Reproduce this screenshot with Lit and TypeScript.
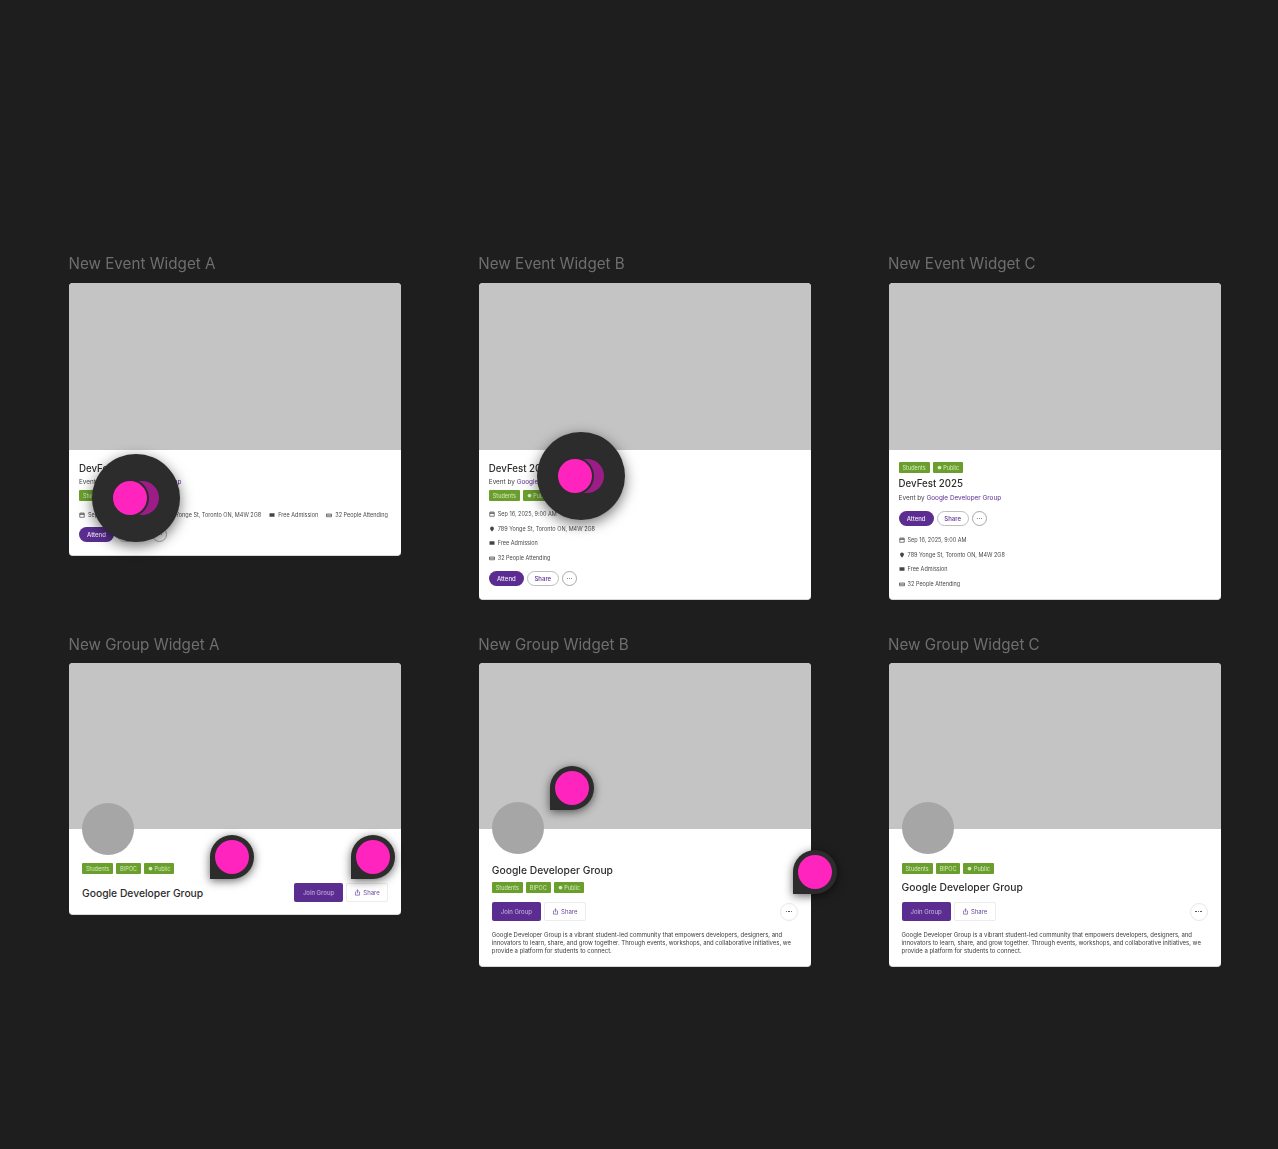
import { LitElement, html, css, svg } from "lit";
import { customElement } from "lit/decorators.js";

const icons: Record<string, unknown> = {
  cal: svg`<path d="M1.5 2.5h9v8h-9zM1.5 5h9M4 1v2.5M8 1v2.5" fill="none" stroke="currentColor" stroke-width="1.4"/>`,
  pin: svg`<path d="M6 11S2.2 7.4 2.2 4.8a3.8 3.8 0 0 1 7.6 0C9.800 7.400 6 11 6 11z" fill="currentColor"/>`,
  ticket: svg`<path d="M1 2.500h4.500L6 3.200l.5-.7H11v7H6.500L6 8.800l-.5.700H1z" fill="currentColor"/>`,
  people: svg`<path d="M1 9.500V4h10v5.500zM1 6.500h10" fill="none" stroke="currentColor" stroke-width="1.400"/>`,
  share: svg`<path d="M4 5H2.500v5.500h7V5H8M6 7.500V1.500M4.200 3.200 6 1.500l1.800 1.700" fill="none" stroke="currentColor" stroke-width="1"/>`,
  globe: svg`<circle cx="6" cy="6" r="4.500" fill="currentColor"/>`,
};

const icon = (name: string, cls = "ic") =>
  html`<svg class=${cls} viewBox="0 0 12 12" aria-hidden="true">${icons[name]}</svg>`;

const meta: [string, string][] = [
  ["cal", "Sep 16, 2025, 9:00 AM"],
  ["pin", "789 Yonge St, Toronto ON, M4W 2G8"],
  ["ticket", "Free Admission"],
  ["people", "32 People Attending"],
];

const dots = html`<span class="dots"><i></i><i></i><i></i></span>`;

@customElement("app-root")
export class AppRoot extends LitElement {
  static styles = css`
    :host {
      display: block;
      width: 1278px;
      height: 1149px;
      overflow: hidden;
      background: #1e1e1e;
      font-family: Inter, "Liberation Sans", sans-serif;
      color: #2a2a2a;
    }
    .board {
      display: grid;
      grid-template-columns: repeat(3, 332px);
      grid-template-rows: 381px auto;
      column-gap: 77.800px;
      padding: 255px 0 0 69px;
    }
    .cell { display: flex; flex-direction: column; gap: 10px; align-items: stretch; min-width: 0; }
    .cell.lower { gap: 9px; }
    .label {
      font-size: 15.200px;
      line-height: 18px;
      margin-left: -0.500px;
      color: #6e6e6e;
      white-space: nowrap;
      filter: blur(0.300px);
    }
    .card {
      position: relative;
      background: #fff;
      border-radius: 4px;
      border-bottom: 1px solid #d8d8d8;
      box-sizing: border-box;
      filter: blur(0.500px);
    }
    .cover { background: #c4c4c4; border-radius: 4px 4px 0 0; }
    .cover.event { height: 167px; }
    .cover.group { height: 166px; }
    .body { display: flex; flex-direction: column; }
    .event-body { padding: 0 10px; }
    .group-body { padding: 0 13px; }

    h3 { margin: 0; font-weight: 500; white-space: nowrap; color: #2c2c2c; }
    .ev-title { font-size: 9.700px; line-height: 13px; }
    .gr-title { font-size: 10.300px; line-height: 14px; }
    .by { font-size: 6.400px; line-height: 9px; white-space: nowrap; color: #444; }
    .by b { font-weight: 400; color: #5b2d91; }

    .tags { display: flex; gap: 3px; }
    .tag {
      display: flex;
      align-items: center;
      gap: 1.500px;
      height: 11px;
      padding: 0 4px;
      background: #6a9f2e;
      color: #d6e8bf;
      font-size: 5.500px;
      border-radius: 1px;
      white-space: nowrap;
    }
    .tag svg { width: 5px; height: 5px; color: inherit; }

    .meta { display: flex; flex-direction: column; gap: 6.500px; }
    .meta.row { flex-direction: row; gap: 8px; }
    .mi {
      display: flex;
      align-items: center;
      gap: 3px;
      font-size: 5.500px;
      line-height: 8px;
      color: #4a4a4a;
      white-space: nowrap;
    }
    .ic { width: 6px; height: 6px; color: #444; flex: none; }

    .actions { display: flex; align-items: center; gap: 3px; }
    .pill {
      display: flex;
      align-items: center;
      justify-content: center;
      height: 15px;
      border-radius: 8px;
      font-size: 6px;
      font-weight: 500;
      box-sizing: border-box;
    }
    .pill.attend { width: 35px; background: #5b2d91; color: #f2eaf8; }
    .pill.share { width: 32px; background: #fff; border: 1px solid #bdbdbd; color: #5b2d91; }
    .pill.more { width: 15px; background: #fff; border: 1px solid #a8a8a8; color: #666; }

    .dots { display: flex; gap: 1px; }
    .dots i { width: 1px; height: 1px; border-radius: 50%; background: currentColor; display: block; }

    .avatar {
      width: 52px;
      height: 52px;
      border-radius: 50%;
      background: #a6a6a6;
      margin-top: -27px;
      flex: none;
    }
    .avatar.low { margin-top: -26px; }
    .btns { display: flex; align-items: center; gap: 3px; }
    .btn {
      display: flex;
      align-items: center;
      justify-content: center;
      gap: 2px;
      height: 19px;
      border-radius: 2px;
      font-size: 6px;
      box-sizing: border-box;
      white-space: nowrap;
    }
    .btn.join { width: 49px; background: #5b2d91; color: #cdb8e4; }
    .btn.sh { width: 42px; background: #fff; border: 1px solid #ececec; color: #6a4a9a; }
    .btn.sh svg { width: 7px; height: 7px; color: #5b2d91; }
    .spread { display: flex; align-items: center; justify-content: space-between; }
    .circle {
      width: 18px;
      height: 18px;
      border-radius: 50%;
      border: 1px solid #e8e8e8;
      box-sizing: border-box;
      display: flex;
      align-items: center;
      justify-content: center;
      color: #444;
    }
    .circle .dots i { width: 1.500px; height: 1.500px; }
    .desc {
      margin: 0;
      font-size: 5.960px;
      line-height: 8px;
      color: #3a3a3a;
    }

    /* overlays */
    .cursor {
      position: absolute;
      width: 88px;
      height: 88px;
      border-radius: 50%;
      background: #2c2c2c;
      box-shadow: 0 4px 14px rgba(0, 0, 0, 0.55);
    }
    .cursor .back, .cursor .front {
      position: absolute;
      top: 27px;
      width: 34px;
      height: 34px;
      border-radius: 50%;
    }
    .cursor .back {
      left: 33px;
      background: radial-gradient(circle, #d41fb4 0.6px, #9c1c88 0.7px) 0 0 / 2px 2px;
    }
    .cursor .front {
      left: 21px;
      background: #ff24bd;
      box-shadow: 0 0 0 2px #2c2c2c;
    }
    .pinm {
      position: absolute;
      width: 44px;
      height: 44px;
      box-sizing: border-box;
      padding: 5px;
      background: #2c2c2c;
      border-radius: 50% 50% 50% 0;
      box-shadow: 0 2px 10px rgba(0, 0, 0, 0.6);
    }
    .pinm::after {
      content: "";
      display: block;
      width: 34px;
      height: 34px;
      border-radius: 50%;
      background: #ff24bd;
    }
    .sp { flex: none; }
  `;

  private tags(group: boolean) {
    return html`<div class="tags">
      <span class="tag">Students</span>
      ${group ? html`<span class="tag">BIPOC</span>` : ""}
      <span class="tag">${icon("globe", "")}Public</span>
    </div>`;
  }

  private metaList(row = false) {
    return html`<div class="meta ${row ? "row" : ""}">
      ${meta.map(([i, t]) => html`<div class="mi">${icon(i)}${t}</div>`)}
    </div>`;
  }

  private eventActions() {
    return html`<div class="actions">
      <div class="pill attend">Attend</div>
      <div class="pill share">Share</div>
      <div class="pill more">${dots}</div>
    </div>`;
  }

  private groupBtns() {
    return html`<div class="btns">
      <div class="btn join">Join Group</div>
      <div class="btn sh">${icon("share", "")}Share</div>
    </div>`;
  }

  private gap(px: number) {
    return html`<div class="sp" style="height:${px}px"></div>`;
  }

  private desc() {
    return html`<p class="desc">
      Google Developer Group is a vibrant student-led community that empowers developers, designers, and
      innovators to learn, share, and grow together. Through events, workshops, and collaborative initiatives, we
      provide a platform for students to connect.
    </p>`;
  }

  private get cursor() {
    return html`<span class="back"></span><span class="front"></span>`;
  }

  render() {
    const title = html`<h3 class="ev-title">DevFest 2025</h3>`;
    const by = html`<div class="by">Event by <b>Google Developer Group</b></div>`;
    const grTitle = html`<h3 class="gr-title">Google Developer Group</h3>`;
    return html`<div class="board">
      <div class="cell">
        <div class="label">New Event Widget A</div>
        <div class="card" style="height:273px">
          <div class="cover event"></div>
          <div class="body event-body">
            ${this.gap(12)}${title}${this.gap(3)}${by}${this.gap(3)}${this.tags(false)}${this.gap(10)}
            ${this.metaList(true)}${this.gap(8)}${this.eventActions()}
          </div>
          <div class="cursor" style="left:23px;top:171px">${this.cursor}</div>
        </div>
      </div>
      <div class="cell">
        <div class="label">New Event Widget B</div>
        <div class="card" style="height:317px">
          <div class="cover event"></div>
          <div class="body event-body">
            ${this.gap(12)}${title}${this.gap(3)}${by}${this.gap(3)}${this.tags(false)}${this.gap(9)}
            ${this.metaList()}${this.gap(9)}${this.eventActions()}
          </div>
          <div class="cursor" style="left:58px;top:149px">${this.cursor}</div>
        </div>
      </div>
      <div class="cell">
        <div class="label">New Event Widget C</div>
        <div class="card" style="height:317px">
          <div class="cover event"></div>
          <div class="body event-body">
            ${this.gap(12)}${this.tags(false)}${this.gap(4)}${title}${this.gap(4)}${by}${this.gap(8)}
            ${this.eventActions()}${this.gap(10)}${this.metaList()}
          </div>
        </div>
      </div>

      <div class="cell lower">
        <div class="label">New Group Widget A</div>
        <div class="card" style="height:252px">
          <div class="cover group"></div>
          <div class="body group-body">
            <div class="avatar low"></div>
            ${this.gap(8)}${this.tags(true)}${this.gap(9)}
            <div class="spread">${grTitle}${this.groupBtns()}</div>
          </div>
          <div class="pinm" style="left:141px;top:172px"></div>
          <div class="pinm" style="left:282px;top:172px"></div>
        </div>
      </div>
      <div class="cell lower">
        <div class="label">New Group Widget B</div>
        <div class="card" style="height:304px">
          <div class="cover group"></div>
          <div class="body group-body">
            <div class="avatar"></div>
            ${this.gap(9)}${grTitle}${this.gap(5)}${this.tags(true)}${this.gap(9)}
            <div class="spread">${this.groupBtns()}<div class="circle">${dots}</div></div>
            ${this.gap(10)}${this.desc()}
          </div>
          <div class="pinm" style="left:71px;top:103px"></div>
          <div class="pinm" style="left:314px;top:187px"></div>
        </div>
      </div>
      <div class="cell lower">
        <div class="label">New Group Widget C</div>
        <div class="card" style="height:304px">
          <div class="cover group"></div>
          <div class="body group-body">
            <div class="avatar"></div>
            ${this.gap(9)}${this.tags(true)}${this.gap(6)}${grTitle}${this.gap(8)}
            <div class="spread">${this.groupBtns()}<div class="circle">${dots}</div></div>
            ${this.gap(10)}${this.desc()}
          </div>
        </div>
      </div>
    </div>`;
  }
}
